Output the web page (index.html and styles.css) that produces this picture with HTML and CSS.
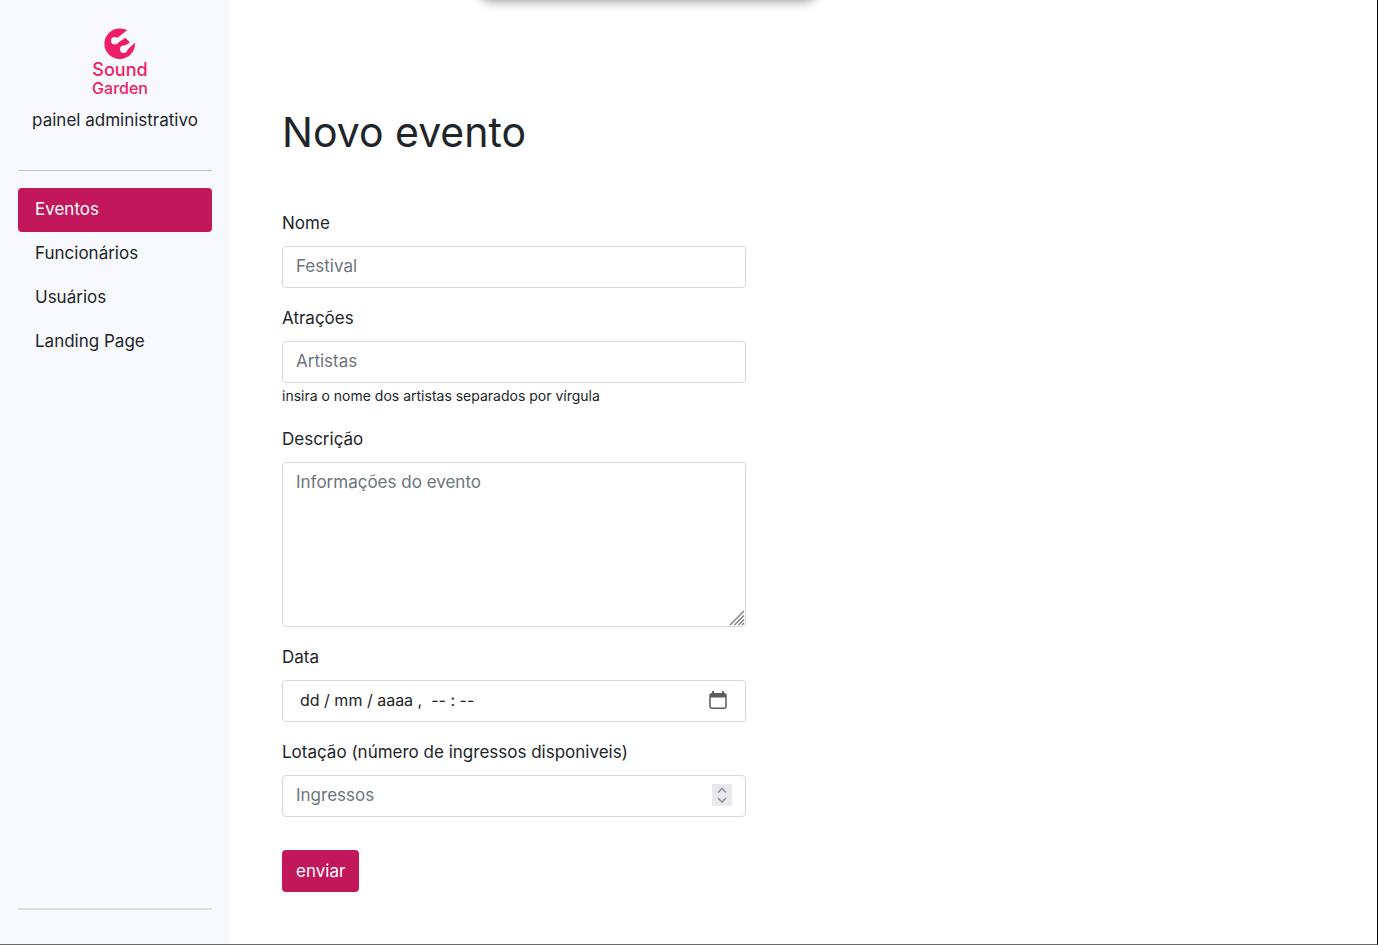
FILE: index.html
```html
<!DOCTYPE html>
<html lang="pt-BR">
<head>
<meta charset="utf-8">
<meta name="viewport" content="width=device-width, initial-scale=1">
<title>Sound Garden - Novo evento</title>
<link rel="stylesheet" href="styles.css">
</head>
<body>
<div class="top-shadow"></div>
<div class="layout">
  <aside class="sidebar">
    <a class="brand" href="#">
      <span class="logo">
        <svg class="logo-mark" viewBox="0 0 32 32" aria-hidden="true">
          <circle cx="15.700" cy="15.700" r="15.300" fill="#ed1e67"/>
          <g fill="#f8f9fc">
            <path d="M24 1.500L12 11L13 15.500L21.300 9.700L26 14.500L18.500 19L22 23L34 12V0Z"/>
            <circle cx="10.700" cy="12.700" r="3.700"/>
            <circle cx="19.700" cy="21.200" r="3.700"/>
          </g>
        </svg>
        <span class="logo-text">Sound</span>
        <span class="logo-text logo-text-small">Garden</span>
      </span>
      <span class="brand-caption">painel administrativo</span>
    </a>
    <hr class="rule">
    <nav class="menu">
      <a class="menu-link active" href="#">Eventos</a>
      <a class="menu-link" href="#">Funcionários</a>
      <a class="menu-link" href="#">Usuários</a>
      <a class="menu-link" href="#">Landing Page</a>
    </nav>
    <hr class="rule rule-bottom">
  </aside>
  <main class="content">
    <h1 class="title">Novo evento</h1>
    <form class="form">
      <div class="field">
        <label class="label" for="nome">Nome</label>
        <input class="control" id="nome" type="text" placeholder="Festival">
      </div>
      <div class="field">
        <label class="label" for="atracoes">Atrações</label>
        <input class="control" id="atracoes" type="text" placeholder="Artistas" aria-describedby="ajuda">
        <div class="help" id="ajuda">insira o nome dos artistas separados por vírgula</div>
      </div>
      <div class="field">
        <label class="label" for="descricao">Descrição</label>
        <div class="control-wrap">
          <textarea class="control control-area" id="descricao" placeholder="Informações do evento"></textarea>
          <svg class="grip" viewBox="0 0 16 16" aria-hidden="true"><path d="M1 15L15 1M5.500 15L15 5.500M9.500 15L15 9.500M13 15L15 13"/></svg>
        </div>
      </div>
      <div class="field">
        <label class="label" for="data">Data</label>
        <div class="control-wrap">
          <input class="control control-date" id="data" type="text" value="dd / mm / aaaa ,  -- : --">
          <button class="calendar" type="button" aria-label="Abrir calendário">
            <svg viewBox="0 0 18 18" aria-hidden="true"><rect x="1" y="2.800" width="16" height="14.400" rx="2" fill="none" stroke="#5b5b60" stroke-width="1.500"/><path d="M1 6.500V4.500Q1 2.500 3 2.500H15Q17 2.500 17 4.500V6.500ZM3.200 0H5V3H3.200ZM13 0H14.800V3H13Z" fill="#5b5b60"/></svg>
          </button>
        </div>
      </div>
      <div class="field">
        <label class="label" for="lotacao">Lotação (número de ingressos disponiveis)</label>
        <div class="control-wrap">
          <input class="control" id="lotacao" type="number" placeholder="Ingressos">
          <svg class="spinner" viewBox="0 0 20 22" aria-hidden="true"><path d="M6 8.500L10 4.500L14 8.500M6 14L10 18L14 14"/></svg>
        </div>
      </div>
      <button class="submit" type="submit">enviar</button>
    </form>
  </main>
</div>
</body>
</html>
```

FILE: styles.css
```css
* {
  box-sizing: border-box;
}

body {
  margin: 0;
  font-family: Inter, "Liberation Sans", sans-serif;
  font-size: 17px;
  line-height: 26px;
  color: #212529;
  background: #fff;
}

.top-shadow {
  position: absolute;
  top: -40px;
  left: 482px;
  width: 332px;
  height: 38px;
  border-radius: 8px;
  box-shadow: 0 0 12px 2px rgba(0, 0, 0, 0.5);
}

.layout {
  display: flex;
  min-height: 100vh;
  border-right: 1px solid #000;
  border-bottom: 1px solid #6b6b6b;
}

.sidebar {
  display: flex;
  flex-direction: column;
  flex: 0 0 230px;
  padding: 28px 18px 34px;
  background: #f8f9fc;
}

.brand {
  display: flex;
  flex-direction: column;
  align-items: center;
  color: #212529;
  text-decoration: none;
}

.logo {
  display: flex;
  flex-direction: column;
  align-items: center;
  margin-left: 10px;
  color: #ed1e67;
}

.logo-mark {
  width: 32px;
  height: 32px;
}

.logo-text {
  font-size: 18px;
  line-height: 20px;
  font-weight: 500;
}

.logo-text-small {
  font-size: 16px;
  line-height: 16px;
}

.brand-caption {
  margin-top: 11px;
}

.rule {
  width: 100%;
  height: 1px;
  margin: 37px 0 17px;
  border: 0;
  background: #bfc0c4;
}

.rule-bottom {
  height: 2px;
  margin: auto 0 0;
  background: #dcdde0;
}

.menu {
  display: flex;
  flex-direction: column;
}

.menu-link {
  padding: 8px 17px 10px;
  border-radius: 4px;
  color: #212529;
  text-decoration: none;
}

.menu-link.active {
  color: #fff;
  background: #c2185b;
}

.content {
  flex: 1;
  padding: 106px 52px 52px;
}

.title {
  margin: 0 0 52px;
  font-size: 41px;
  line-height: 52px;
  font-weight: 400;
}

.form {
  max-width: 464px;
}

.field {
  margin-bottom: 17px;
}

.label {
  display: block;
  margin-bottom: 10px;
}

.help {
  font-size: 14px;
}

.control {
  display: block;
  width: 100%;
  height: 42px;
  padding: 6px 13px 8px;
  border: 1px solid #d3d9de;
  border-radius: 4px;
  font: inherit;
  color: #212529;
  background: #fff;
  appearance: none;
}

.control::placeholder {
  color: #6c757d;
  opacity: 1;
}

.control[type="number"] {
  appearance: textfield;
}

.control-wrap {
  position: relative;
}

.control-area {
  height: 165px;
  resize: none;
}

.control-date {
  padding-left: 17px;
  font-size: 16px;
}

.grip {
  position: absolute;
  right: 1px;
  bottom: 1px;
  width: 16px;
  height: 16px;
  fill: none;
  stroke: #77777c;
  stroke-width: 1.3;
}

.calendar {
  position: absolute;
  top: 11px;
  right: 19px;
  width: 18px;
  height: 18px;
  padding: 0;
  border: 0;
  background: none;
}

.calendar svg {
  display: block;
}

.spinner {
  position: absolute;
  top: 9px;
  right: 14px;
  width: 20px;
  height: 22px;
  background: #e9e9ed;
  fill: none;
  stroke: #8f8f9d;
  stroke-width: 1.6;
}

.submit {
  height: 42px;
  margin-top: 16px;
  padding: 0 14px;
  border: 0;
  border-radius: 4px;
  font: inherit;
  color: #fff;
  background: #c2185b;
}
```
